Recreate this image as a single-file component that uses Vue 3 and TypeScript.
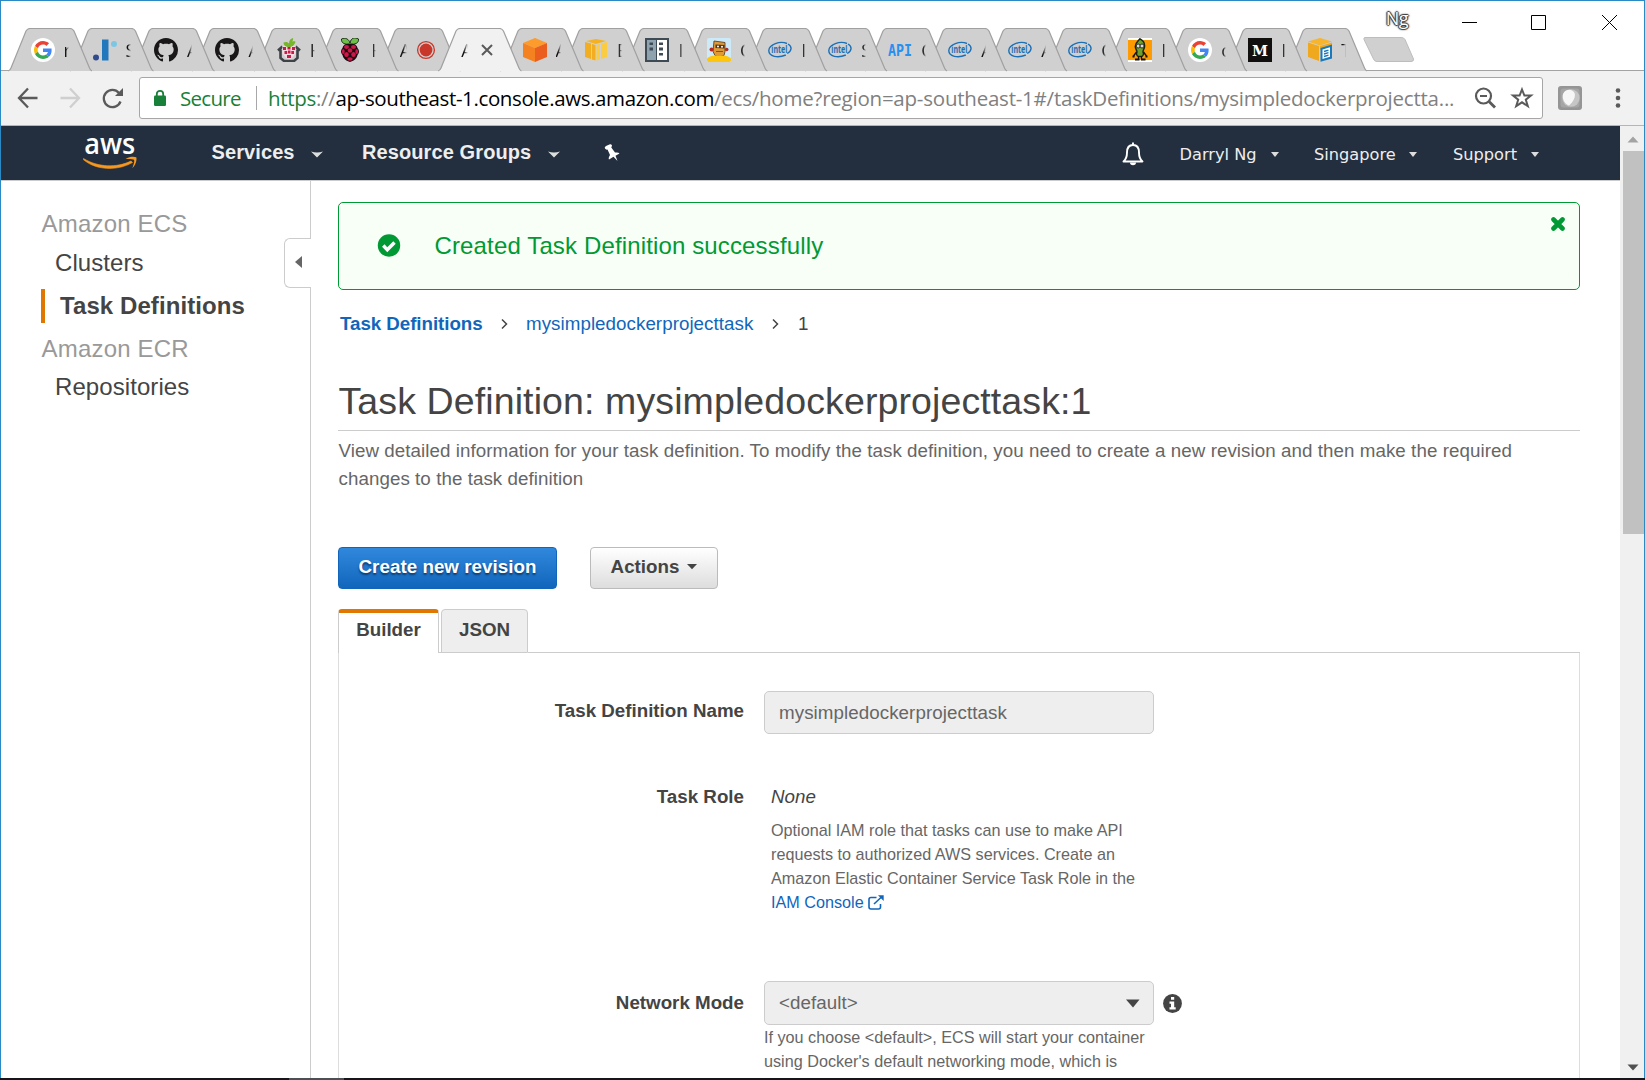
<script setup lang="ts">
interface BrowserTab {
  icon: string
  text: string
  width: number
  kind?: 'recording' | 'active'
}

const wide = 61.45
const narrow = 60

const tabs: BrowserTab[] = [
  { icon: 'google', text: 'r', width: 62 },
  { icon: 'bars', text: 'S', width: wide },
  { icon: 'github', text: 'A', width: wide },
  { icon: 'github', text: 'A', width: wide },
  { icon: 'berryhome', text: 'H', width: wide },
  { icon: 'raspberry', text: 'H', width: wide },
  { icon: 'record', text: 'A', width: wide, kind: 'recording' },
  { icon: 'close', text: 'A', width: wide, kind: 'active' },
  { icon: 'cube', text: 'A', width: wide },
  { icon: 'boxes', text: 'E', width: wide },
  { icon: 'cabinet', text: 'I', width: wide },
  { icon: 'robot', text: 'C', width: wide },
  { icon: 'intel', text: 'I', width: narrow },
  { icon: 'intel', text: 'S', width: narrow },
  { icon: 'api', text: 'C', width: narrow },
  { icon: 'intel', text: 'A', width: narrow },
  { icon: 'intel', text: 'A', width: narrow },
  { icon: 'intel', text: 'C', width: narrow },
  { icon: 'pea', text: 'I', width: narrow },
  { icon: 'google', text: 'c', width: narrow },
  { icon: 'medium', text: 'I', width: narrow },
  { icon: 'package', text: 'T', width: narrow },
]

const accountMenus = [
  { label: 'Darryl Ng', cls: 'm-user' },
  { label: 'Singapore', cls: 'm-region' },
  { label: 'Support', cls: 'm-support' },
]

function fillPath(w: number): string {
  return `M0 43 Q2 42.500 3 40 L18 3 Q19.500 0.500 22 0.500 L${w} 0.500 Q${w + 2.5} 0.500 ${w + 4} 3 L${w + 19.5} 40 Q${w + 20.5} 42.500 ${w + 22} 43 Z`
}

function strokePath(w: number): string {
  return fillPath(w).replace(' Z', '')
}
</script>

<template>
  <svg class="defs" width="0" height="0">
    <symbol id="google" viewBox="0 0 24 24">
      <circle cx="12" cy="12" r="12" fill="#fff" />
      <g transform="translate(3 3) scale(.375)">
        <path fill="#EA4335" d="M24 9.500c3.540 0 6.710 1.220 9.210 3.600l6.850-6.850C35.900 2.380 30.470 0 24 0 14.620 0 6.510 5.380 2.560 13.220l7.980 6.190C12.430 13.720 17.740 9.500 24 9.500z" />
        <path fill="#4285F4" d="M46.980 24.550c0-1.570-.15-3.090-.38-4.550H24v9.020h12.940c-.58 2.960-2.260 5.480-4.780 7.180l7.730 6c4.510-4.180 7.090-10.360 7.090-17.650z" />
        <path fill="#FBBC05" d="M10.530 28.590c-.48-1.450-.76-2.990-.76-4.590s.27-3.140.76-4.590l-7.980-6.190C.92 16.460 0 20.120 0 24c0 3.880.92 7.540 2.560 10.780l7.970-6.190z" />
        <path fill="#34A853" d="M24 48c6.480 0 11.930-2.130 15.890-5.810l-7.730-6c-2.150 1.450-4.920 2.300-8.160 2.300-6.260 0-11.570-4.220-13.470-9.910l-7.980 6.190C6.510 42.620 14.620 48 24 48z" />
      </g>
    </symbol>
    <symbol id="bars" viewBox="0 0 24 24">
      <circle cx="3" cy="19.500" r="3" fill="#324a8e" />
      <rect x="9" y="1.500" width="6.500" height="21" fill="#2178bd" />
      <circle cx="21" cy="6" r="3" fill="#7cc6e4" />
    </symbol>
    <symbol id="github" viewBox="0 0 16 16">
      <path fill="#191717" d="M8 0C3.580 0 0 3.580 0 8c0 3.540 2.290 6.530 5.470 7.590.4.070.55-.17.55-.38 0-.19-.01-.82-.01-1.490-2.010.37-2.530-.49-2.690-.94-.09-.23-.48-.94-.82-1.130-.28-.15-.68-.52-.01-.53.63-.01 1.080.58 1.230.82.72 1.210 1.870.87 2.330.66.07-.52.28-.87.51-1.070-1.780-.2-3.640-.89-3.640-3.950 0-.87.31-1.590.82-2.150-.08-.2-.36-1.020.08-2.120 0 0 .67-.21 2.200.82.64-.18 1.320-.27 2-.27s1.360.09 2 .27c1.530-1.040 2.200-.82 2.200-.82.44 1.100.16 1.920.08 2.120.51.56.82 1.270.82 2.150 0 3.070-1.870 3.750-3.650 3.950.29.25.54.73.54 1.480 0 1.070-.01 1.930-.01 2.200 0 .21.15.46.55.38A8.010 8.010 0 0 0 16 8c0-4.420-3.580-8-8-8z" />
    </symbol>
    <symbol id="berryhome" viewBox="0 0 24 24">
      <path d="M1 12.500L5.500 8.500M23 12.500L18.500 8.500M3.500 11.500v8.500l3.500 3h10l3.500-3v-8.500" fill="none" stroke="#3d4347" stroke-width="2.600" />
      <path d="M5.500 8h13v7.500l-4 5h-5l-4-5z" fill="#f3dbe2" />
      <path d="M6 9h3v3H6zM10.500 8h3v3.500h-3zM15 9h3v3h-3zM7.500 13h2.700v3H7.500zM11 12.500h2.500v3H11zM14.300 13H17v3h-2.700zM10 17h4v3h-4z" fill="#c91c4b" />
      <path d="M12 9C8.500 9 6.500 7 6.500 4.500c2.500-1 4.500-.5 5.500 1 0-3 1.500-5 4-5.500.3 1.500 0 2.500-1 3.500 2-.5 3.500-.5 3.500.5C17.500 7 15 9 12 9z" fill="#77b52b" />
    </symbol>
    <symbol id="raspberry" viewBox="0 0 24 24">
      <path d="M12 6C7 7 3 5 3.500 1 7-1 11 1 12 5 13-.5 17-1 20.500 1 21 5 17 7 12 6z" fill="#6cc04a" stroke="#1b2a12" stroke-width="1" />
      <path d="M12 6c4-1 7 1 7.500 4 2 2 2 5 0 7-1 4-4 6-7.500 7-3.500-1-6.500-3-7.500-7-2-2-2-5 0-7C5 7 8 5 12 6z" fill="#1d0a12" />
      <g fill="#cf1848">
        <ellipse cx="8.500" cy="9" rx="2.500" ry="2" /><ellipse cx="15.500" cy="9" rx="2.500" ry="2" />
        <circle cx="12" cy="12.500" r="2.300" /><ellipse cx="5.300" cy="13.500" rx="1.400" ry="2.500" />
        <ellipse cx="18.700" cy="13.500" rx="1.400" ry="2.500" /><ellipse cx="8.500" cy="16.500" rx="2.300" ry="2.500" />
        <ellipse cx="15.500" cy="16.500" rx="2.300" ry="2.500" /><ellipse cx="12" cy="21" rx="2.700" ry="1.800" />
      </g>
    </symbol>
    <symbol id="record" viewBox="0 0 24 24">
      <circle cx="12" cy="12" r="8.400" fill="none" stroke="#c8372a" stroke-width="1.300" />
      <circle cx="12" cy="12" r="6.400" fill="#c8372a" />
    </symbol>
    <symbol id="close" viewBox="0 0 24 24">
      <path d="M7 7l10 10M17 7L7 17" stroke="#5a5a5a" stroke-width="2" />
    </symbol>
    <symbol id="cube" viewBox="0 0 24 24">
      <path d="M12 0l12 5-12 5L0 5z" fill="#fd9b2c" />
      <path d="M0 5l12 5v14L0 19z" fill="#f58220" />
      <path d="M24 5l-12 5v14l12-5z" fill="#ea5f1e" />
    </symbol>
    <symbol id="boxes" viewBox="0 0 24 24">
      <path d="M12 1l10 2-10 3L2 3z" fill="#f4b223" />
      <path d="M1 4l6 1.500V21l-6-2zM8 6l3.500 1v15.500l-3.500-1z" fill="#f2ae20" />
      <path d="M23 4l-6 1.500V21l6-2zM16 6l-3.500 1v15.500l3.500-1z" fill="#fbcc3f" />
    </symbol>
    <symbol id="cabinet" viewBox="0 0 24 24">
      <rect width="24" height="24" fill="#3f4b54" />
      <rect x="2" y="2" width="9" height="20" fill="#8fa3ae" />
      <rect x="12" y="2" width="10" height="20" fill="#fff" />
      <path d="M4.500 4.500h3.500v2.500H4.500zM4.500 9.500h3.500v3H4.500zM14 4.500h4v2.500h-4zM14 9.500h4v3h-4zM14 15h4v2.500h-4z" fill="#3f4b54" />
    </symbol>
    <symbol id="robot" viewBox="0 0 24 24">
      <rect width="24" height="24" rx="2" fill="#cdeaf8" />
      <path d="M7 3l11 1.500v9l-1 4H8l-2-4z" fill="#e09a35" stroke="#4c351e" stroke-width=".8" />
      <path d="M0 20.500c3-4.500 21-4.500 24 0V22q0 2-2 2H2q-2 0-2-2z" fill="#fdc50c" />
      <path d="M8.500 6.500l9 .5v3.500l-9-.5z" fill="#4a3526" />
      <circle cx="11" cy="8.400" r="1" fill="#fff" /><circle cx="15" cy="8.700" r="1" fill="#fff" />
      <path d="M9 13.500h7" stroke="#7a5426" />
      <circle cx="4.500" cy="11.500" r="2" fill="#b32a25" /><circle cx="19.700" cy="11.500" r="1.800" fill="#b32a25" />
    </symbol>
    <symbol id="pea" viewBox="0 0 24 24">
      <rect width="24" height="24" fill="#fff" />
      <rect y="2" width="24" height="20" fill="#ff9a00" />
      <path d="M12 .8c3 1.500 5 4 4.500 8C16.200 11 15 12 15 14c.8 1.500.5 4-1.500 4.500h-3C8.500 18 8.200 15.500 9 14c0-2-1.700-3-1.700-5.500C7.300 5 9 4 12 .8z" fill="#6f9f2f" stroke="#1c240e" stroke-width="1.500" />
      <circle cx="10.200" cy="8" r="2" fill="#ddd" stroke="#222" stroke-width=".9" /><circle cx="14" cy="8" r="2" fill="#ddd" stroke="#222" stroke-width=".9" />
      <path d="M8.500 14l-3 4M15.500 14l3 4M10.500 18v3M13.500 18v3" stroke="#111" stroke-width="1.300" fill="none" />
      <path d="M7 21.500h4.500M13 21.500h4.500M4.500 18.500h2M17.500 18.500h2" stroke="#111" stroke-width="2" />
    </symbol>
    <symbol id="package" viewBox="0 0 24 24">
      <path d="M12 0l12 3.500L12 7.500 0 3.500z" fill="#f6b52c" />
      <path d="M0 4.500l11 3.500v15L0 19z" fill="#f0a81f" />
      <path d="M24 4.500l-12 3.500v4l12-4z" fill="#f0a81f" />
      <path d="M12.500 10L24 6.500v14L12.500 23.800z" fill="#1879bb" />
      <path d="M14.500 11.500l7.500-2.300v9.500L14.500 21z" fill="#fff" />
      <path d="M16 13.500l4.500-1.300M16 16l4.500-1.300M16 18.500l4.500-1.300" stroke="#1879bb" stroke-width="1.400" />
    </symbol>
  </svg>

  <div class="screen">
    <div class="window">
      <header class="titlebar">
        <div class="tabs">
          <div
            v-for="(tab, i) in tabs"
            :key="i"
            class="tab"
            :class="tab.kind"
            :style="{ width: tab.width + 'px', zIndex: tab.kind === 'active' ? 50 : 40 - i }"
          >
            <svg class="tab-shape" width="84" height="44" viewBox="0 0 84 44">
              <path class="tab-fill" :d="fillPath(tab.width)" />
              <path class="tab-line" :d="strokePath(tab.width)" />
            </svg>
            <svg v-if="tab.icon === 'intel'" class="favicon" viewBox="0 0 24 24">
              <path d="M19 5.500C12 2.500 1 6.500.8 12.500c0 6 9 8 17 4.500M20 6c4.500 2.500 3.800 7-.8 9.500" fill="none" stroke="#1a6fb5" stroke-width="1.400" />
              <text x="3.300" y="15.400" textLength="16" lengthAdjust="spacingAndGlyphs" font-family="Open Sans, sans-serif" font-size="10" font-weight="700" fill="#1a6fb5">intel</text>
            </svg>
            <svg v-else-if="tab.icon === 'api'" class="favicon" viewBox="0 0 24 24">
              <text x="0" y="18" textLength="24" lengthAdjust="spacingAndGlyphs" font-family="DejaVu Sans Mono, monospace" font-size="16" font-weight="700" fill="#2a8fee">API</text>
            </svg>
            <svg v-else-if="tab.icon === 'medium'" class="favicon" viewBox="0 0 24 24">
              <rect width="24" height="24" fill="#12100e" />
              <text x="4" y="17.600" textLength="16" lengthAdjust="spacingAndGlyphs" font-family="DejaVu Serif, serif" font-size="15.500" font-weight="700" fill="#fff">M</text>
            </svg>
            <svg v-else class="favicon"><use :href="'#' + tab.icon" /></svg>
            <span class="tab-text">{{ tab.text }}</span>
          </div>
          <svg class="new-tab" width="54" height="28" viewBox="0 0 54 28">
            <path d="M4 1.500H40Q43 1.500 44 3.500L52.500 23Q53 25.500 50 25.500H16Q13.500 25.500 12.500 23L3 3.500Q2.500 1.500 4 1.500Z" fill="#d0d0d0" stroke="#bdbdbd" />
          </svg>
        </div>
        <div class="controls">
          <span class="profile">Ng</span>
          <svg width="230" height="44" viewBox="0 0 230 44" fill="none" stroke="#000" stroke-width="1">
            <path d="M48 21.500H63M117.500 14.500h14v14h-14zM188 14l15 15M203 14L188 29" />
          </svg>
        </div>
      </header>

      <div class="toolbar">
        <svg class="nav-icons" width="138" height="54" viewBox="0 0 138 54" fill="none" stroke-width="2.300">
          <path d="M36.500 27H19M27 17.500L18 27 27 36.500" stroke="#5a5a5a" />
          <path d="M59.500 27H77.500M69 17.500L78 27 69 36.500" stroke="#cfcfcf" />
          <path d="M118 22A8.600 8.600 0 1 0 119.500 30.500" stroke="#5a5a5a" />
          <path d="M122 17v8h-8z" fill="#5a5a5a" />
        </svg>
        <div class="omnibox">
          <svg class="lock" width="12" height="18" viewBox="0 0 12 18">
            <path d="M2.800 7V5a3.200 3.200 0 0 1 6.400 0v2" fill="none" stroke="#188038" stroke-width="1.800" />
            <rect y="6.500" width="12" height="10.500" rx="1.200" fill="#188038" />
          </svg>
          <span class="secure">Secure</span>
          <span class="divider"></span>
          <span class="url"><i class="scheme">https</i><i class="slashes">://</i><b>ap-southeast-1.console.aws.amazon.com</b><i>/ecs/home?region=ap-southeast-1#/taskDefinitions/mysimpledockerprojectta...</i></span>
          <svg class="omni-icons" width="62" height="24" viewBox="0 0 62 24" fill="none" stroke="#5a5a5a">
            <circle cx="9.500" cy="10" r="7.500" stroke-width="2.200" />
            <path d="M6 10h7" stroke-width="2" />
            <path d="M15 15.500l6 6" stroke-width="2.800" />
            <path d="M48 3.500l2.400 6h6.600l-5.200 4.200 2 6.500-5.800-3.900-5.800 3.900 2-6.500-5.200-4.200h6.600z" stroke-width="2" />
          </svg>
        </div>
        <svg class="extension" width="24" height="24" viewBox="0 0 24 24">
          <rect width="24" height="24" rx="3" fill="#959595" />
          <rect x="2.500" y="2.500" width="19" height="19" rx="3" fill="#a6a6a6" />
          <circle cx="13" cy="12" r="8.700" fill="#c6c6c6" />
          <path d="M5 8c2.500-6 10-5 11.500-1S15 16 11 19.500C6.500 18 4 13 5 8z" fill="#f7f7f7" />
        </svg>
        <svg class="menu-dots" width="6" height="22" viewBox="0 0 6 22" fill="#5a5a5a">
          <circle cx="3" cy="3.500" r="2.300" /><circle cx="3" cy="11" r="2.300" /><circle cx="3" cy="18.500" r="2.300" />
        </svg>
      </div>

      <div class="viewport">
        <div class="page">
          <nav class="aws-nav">
            <svg class="logo" width="56" height="40" viewBox="0 0 56 40">
              <text x="1.200" y="20.500" textLength="51" lengthAdjust="spacingAndGlyphs" font-family="Open Sans, sans-serif" font-size="29" font-weight="600" fill="#fff">aws</text>
              <path d="M.5 25.500C15 34.500 34 35 48 28l1.500 1.500C34 38.500 12 37 .3 26.500z" fill="#f7981f" stroke="#f7981f" stroke-width=".6" />
              <path d="M42.500 26c4-2.800 8.500-2.500 10.800-1.800.8 3-.8 8-4 11 1.500-4.200 2.500-7 1.700-8.400-1.500-1-5-.8-8.500-.8z" fill="#f7981f" />
            </svg>
            <span class="nav-main services">Services</span>
            <svg class="chev" width="12" height="8" viewBox="0 0 12 8"><path d="M0 1.500Q6 3.500 12 1.500L6 7.500z" fill="#ddd" /></svg>
            <span class="nav-main groups">Resource Groups</span>
            <svg class="chev" width="12" height="8" viewBox="0 0 12 8"><path d="M0 1.500Q6 3.500 12 1.500L6 7.500z" fill="#ddd" /></svg>
            <svg class="pin" width="16" height="18" viewBox="0 0 16 18">
              <path d="M1 4.500Q0 3 2 2L6 .3Q8 0 8 1.800L7.300 3.500 11 8.500Q14.500 8 15.500 9.500L11.500 11.700 13.500 17 9.500 12.700 5 15.500Q4 14 6 11L3.500 5.500Q2 6 1 4.500z" fill="#fff" />
            </svg>
            <svg class="bell" width="22" height="24" viewBox="0 0 22 24" fill="none" stroke="#fff" stroke-width="1.900">
              <path d="M1.500 19.500C4.500 17 5 14 5 10.500 5 6 7 3 11 3s6 3 6 7.500c0 3.500.5 6.500 3.500 9z" stroke-linejoin="round" />
              <path d="M11 3V.5" /><path d="M8 20.500a3 2.800 0 0 0 6 0z" fill="#fff" stroke="none" />
            </svg>
            <span v-for="menu in accountMenus" :key="menu.label" class="account" :class="menu.cls">
              {{ menu.label }}
              <svg width="8" height="6" viewBox="0 0 8 6"><path d="M0 0h8L4 5z" fill="#ddd" /></svg>
            </span>
          </nav>

          <div class="body">
            <aside class="sidebar">
              <div class="side-links">
                <div class="side-head">Amazon ECS</div>
                <div class="side-item">Clusters</div>
                <div class="side-item current">Task Definitions</div>
                <div class="side-head second">Amazon ECR</div>
                <div class="side-item second last">Repositories</div>
              </div>
              <div class="side-rail">
                <div class="handle">
                  <svg width="7" height="12" viewBox="0 0 7 12"><path d="M7 0v12L0 6z" fill="#666" /></svg>
                </div>
              </div>
            </aside>

            <main class="content">
              <div class="alert">
                <svg class="alert-icon" width="24" height="24" viewBox="0 0 24 24">
                  <circle cx="12" cy="11.500" r="11.200" fill="#093" />
                  <path d="M6.300 11.500l4 4.300 7.200-7.300" fill="none" stroke="#fff" stroke-width="3.400" />
                </svg>
                <span class="alert-text">Created Task Definition successfully</span>
                <svg class="alert-close" width="14" height="14" viewBox="0 0 14 14">
                  <path d="M2.500 2.500l9 9M11.500 2.500l-9 9" stroke="#093" stroke-width="4.600" stroke-linecap="round" />
                </svg>
              </div>

              <div class="crumbs">
                <a class="strong">Task Definitions</a>
                <svg width="7" height="12" viewBox="0 0 7 12"><path d="M1 1.500L5.500 6 1 10.500" fill="none" stroke="#444" stroke-width="1.500" /></svg>
                <a>mysimpledockerprojecttask</a>
                <svg width="7" height="12" viewBox="0 0 7 12"><path d="M1 1.500L5.500 6 1 10.500" fill="none" stroke="#444" stroke-width="1.500" /></svg>
                <span>1</span>
              </div>

              <h1>Task Definition: mysimpledockerprojecttask:1</h1>
              <p class="lead">View detailed information for your task definition. To modify the task definition, you need to create a new revision and then make the required<br />changes to the task definition</p>

              <div class="actions">
                <button class="primary">Create new revision</button>
                <button class="secondary">Actions <svg width="10" height="6" viewBox="0 0 10 6"><path d="M0 0h10L5 5.300z" fill="#444" /></svg></button>
              </div>

              <div class="panel-tabs">
                <div class="ptab on">Builder</div>
                <div class="ptab off">JSON</div>
                <div class="ptab-rest"></div>
              </div>

              <section class="panel">
                <div class="row name-row">
                  <label>Task Definition Name</label>
                  <div class="field">mysimpledockerprojecttask</div>
                </div>
                <div class="row role-row">
                  <label>Task Role</label>
                  <div class="role">
                    <em>None</em>
                    <p class="help">Optional IAM role that tasks can use to make API<br />requests to authorized AWS services. Create an<br />Amazon Elastic Container Service Task Role in the<br /><a>IAM Console
                      <svg width="16" height="15" viewBox="0 0 16 15" fill="none" stroke="#1166bb" stroke-width="1.600"><path d="M8.500 2.500H3Q1 2.500 1 4.500V12Q1 14 3 14H10.500Q12.500 14 12.500 12V9M6 9L13.500 2" /><path d="M10 .3h5.700V6z" fill="#1166bb" stroke="none" /></svg></a></p>
                  </div>
                </div>
                <div class="row network-row">
                  <label>Network Mode</label>
                  <div>
                    <div class="select-line">
                      <div class="field select">&lt;default&gt;
                        <svg width="14" height="9" viewBox="0 0 14 9"><path d="M0 .5h13.500L7 8.500z" fill="#444" /></svg>
                      </div>
                      <svg class="info" width="19" height="19" viewBox="0 0 19 19">
                        <circle cx="9.500" cy="9.500" r="9.400" fill="#444" />
                        <path d="M8 3h3.200v2.800H8zM6.500 7.500h4.700v5.700h1.500v2.300H6.500v-2.300H8V9.700H6.500z" fill="#fff" />
                      </svg>
                    </div>
                    <p class="help">If you choose &lt;default&gt;, ECS will start your container<br />using Docker's default networking mode, which is</p>
                  </div>
                </div>
              </section>
            </main>
          </div>
        </div>

        <div class="scrollbar">
          <svg width="12" height="7" viewBox="0 0 12 7"><path d="M6 .5L11.500 6.500H.5z" fill="#a3a3a3" /></svg>
          <div class="thumb"></div>
          <svg class="down" width="12" height="7" viewBox="0 0 12 7"><path d="M6 6.500L11.500 .5H.5z" fill="#505050" /></svg>
        </div>
      </div>
    </div>
    <div class="taskbar"><span></span></div>
  </div>
</template>

<style>
html, body { margin: 0; overflow: hidden; }
</style>

<style scoped>
* { box-sizing: border-box; }
.defs { position: absolute; }
svg { display: block; flex: none; }
p, h1 { margin: 0; }
i, b { font-style: normal; font-weight: 400; }
.screen { width: 1645px; height: 1080px; background: #fff; font-family: "Liberation Sans", Arial, sans-serif; color: #444; overflow: hidden; display: flex; flex-direction: column; }
.window { height: 1078px; border: 1px solid #2a8ac4; border-bottom: 0; display: flex; flex-direction: column; overflow: hidden; }
.taskbar { height: 2px; background: #14161c; padding-left: 289px; display: flex; }
.taskbar span { width: 55px; background: #4c4f54; }

.titlebar { height: 69px; flex: none; display: flex; justify-content: space-between; }
.tabs { display: flex; align-items: flex-end; padding-left: 17px; height: 69px; isolation: isolate; flex: none; }
.tab { height: 42px; position: relative; display: flex; align-items: center; padding: 1px 0 0 12.500px; flex: none; }
.tab-shape { position: absolute; left: -10.500px; bottom: -2px; }
.tab-fill { fill: #d0d0d0; }
.tab-line { fill: none; stroke: #a0a0a0; stroke-width: 1.200; }
.active .tab-fill { fill: #f1f1f1; }
.favicon { width: 24px; height: 24px; position: relative; }
.tab-text { position: relative; font: 18px/24px "Open Sans", sans-serif; color: #111; width: 5px; margin-left: 9px; overflow: hidden; -webkit-mask-image: linear-gradient(90deg, #000 40%, transparent); mask-image: linear-gradient(90deg, #000 40%, transparent); }
.recording .tab-text, .active .tab-text { order: 1; margin: 0 7px 0 0; width: 7px; }
.recording .favicon, .active .favicon { order: 2; }
.new-tab { margin: 0 0 6px 5px; }
.controls { display: flex; height: 44px; flex: none; margin-left: -60px; }
.profile { font: 18px/34px "Open Sans", sans-serif; color: #fff; letter-spacing: -0.5px; margin-right: 6px; text-shadow: 1px 0 1px #333, -1px 0 1px #333, 0 1px 1px #333, 0 -1px 1px #333, 0 0 3px #777; }

.toolbar { height: 56px; flex: none; background: #f1f1f1; border-top: 1px solid #a3a3a3; border-bottom: 1px solid #b6b4b6; display: flex; align-items: center; }
.omnibox { width: 1404px; height: 42px; border: 1px solid #a6a6a6; border-radius: 3px; background: #fff; display: flex; align-items: center; padding-left: 14px; font: 20.500px/30px "Open Sans", sans-serif; flex: none; }
.secure { width: 76px; margin-left: 14px; color: #188038; letter-spacing: -0.700px; }
.divider { width: 1px; height: 24px; background: #a8a8a8; }
.url { margin-left: 11px; width: 1195px; white-space: nowrap; letter-spacing: -0.225px; color: #808080; }
.url b { color: #000; letter-spacing: -0.390px; }
.url .scheme { color: #188038; letter-spacing: -0.300px; }
.url .slashes { letter-spacing: -0.300px; }
.omni-icons { margin-left: 11px; }
.extension { margin-left: 15px; }
.menu-dots { margin-left: 33px; }

.viewport { flex: 1; min-height: 0; display: flex; }
.page { width: 1619px; display: flex; flex-direction: column; overflow: hidden; flex: none; }
.scrollbar { flex: 1; background: #f0f0f0; display: flex; flex-direction: column; align-items: center; padding: 10px 0 7px 2px; }
.thumb { width: 21px; height: 383px; background: #c1c1c1; margin-top: 8px; flex: none; }
.down { margin-top: auto; }

.aws-nav { height: 54px; flex: none; background: #232f3e; display: flex; align-items: flex-start; padding-left: 82px; color: #fff; }
.logo { margin-top: 7px; }
.nav-main { font-size: 20px; line-height: 30px; font-weight: 700; margin-top: 11px; white-space: nowrap; color: #eee; letter-spacing: 0.100px; }
.services { margin-left: 72.500px; width: 99.500px; }
.groups { margin-left: 39px; width: 186px; }
.chev { margin-top: 24px; }
.pin { margin: 18px 0 0 44px; }
.bell { margin: 16px 0 0 502px; }
.account { display: flex; align-items: center; justify-content: space-between; font: 16.200px/30px "DejaVu Sans", sans-serif; color: #eee; margin-top: 14px; white-space: nowrap; }
.m-user { width: 99px; margin-left: 35.500px; }
.m-region { width: 103px; margin-left: 35.500px; }
.m-support { width: 86px; margin-left: 36px; }

.body { flex: 1; min-height: 0; display: flex; border-top: 1px solid #ccc; }
.sidebar { width: 310px; display: flex; flex: none; font-size: 24px; letter-spacing: 0.080px; }
.side-links { width: 283px; padding-top: 23px; }
.side-head { padding-left: 40.500px; line-height: 39px; color: #999; letter-spacing: 0.200px; }
.side-item { padding-left: 54px; line-height: 39px; }
.side-item.current { margin: 7px 0 7px 40px; padding-left: 15px; border-left: 4px solid #e07700; line-height: 34px; font-weight: 700; }
.side-head.second { line-height: 37px; }
.side-item.last { line-height: 39px; }
.side-rail { width: 27px; display: flex; flex-direction: column; }
.side-rail::before, .side-rail::after { content: ""; border-right: 1px solid #ccc; }
.side-rail::before { height: 57px; }
.side-rail::after { flex: 1; }
.handle { height: 50px; border: 1px solid #ccc; border-right: 0; border-radius: 6px 0 0 6px; display: flex; align-items: center; padding: 0 0 2px 10px; }

.content { width: 1242px; margin-left: 27px; padding-top: 21px; flex: none; font-size: 18.750px; }
.alert { height: 88px; border: 1px solid #009a35; border-radius: 5px; background: #f7fff7; display: flex; align-items: center; padding: 0 14px 0 38px; }
.alert-text { margin-left: 33.500px; font-size: 24px; color: #093; flex: 1; letter-spacing: 0.140px; }
.alert-close { align-self: flex-start; margin-top: 14px; }
.crumbs { display: flex; align-items: center; line-height: 28px; margin-top: 20px; padding-left: 2px; white-space: nowrap; }
.crumbs a { color: #1166bb; width: 228px; letter-spacing: 0.050px; }
.crumbs .strong { font-weight: 700; width: 143px; letter-spacing: -0.050px; }
.crumbs svg { margin: 0 18px; }
.crumbs span { margin-left: 1px; }
h1 { font-size: 37.500px; font-weight: 400; line-height: 56px; border-bottom: 1px solid #ccc; margin-top: 35px; height: 58px; white-space: nowrap; letter-spacing: 0.110px; padding-left: 0.5px; }
.lead { line-height: 28px; margin-top: 6px; color: #666; white-space: nowrap; letter-spacing: 0.062px; padding-left: 0.5px; }
.actions { display: flex; gap: 33px; margin-top: 54px; }
button { height: 42px; border-radius: 4px; font: 700 18.750px/28px "Liberation Sans", Arial, sans-serif; padding: 0 0 2px; display: flex; align-items: center; justify-content: center; }
.primary { width: 219px; color: #fff; border: 1px solid #1166bb; background: linear-gradient(#3088dd, #1166bb); text-shadow: 0 2px 2px #0a3c70; letter-spacing: 0.040px; }
.secondary { width: 128px; gap: 8px; color: #444; border: 1px solid #bbb; background: linear-gradient(#fff, #ddd); }
.panel-tabs { display: flex; margin-top: 20px; height: 44px; font-weight: 700; }
.ptab { border: 1px solid #ccc; border-radius: 4px 4px 0 0; text-align: center; line-height: 40px; }
.ptab.on { width: 101px; border-top: 4px solid #e07700; border-bottom: 0; line-height: 34px; }
.ptab.off { width: 87px; margin-left: 2px; background: #eee; position: relative; }
.ptab.off::before { content: ""; position: absolute; left: -3px; bottom: -1px; width: 3px; height: 1px; background: #ccc; }
.ptab-rest { flex: 1; border-bottom: 1px solid #ccc; }
.panel { height: 440px; border: 1px solid #ddd; border-top: 0; border-bottom: 0; padding-top: 38px; }
.row { display: flex; }
.row label { width: 405px; text-align: right; font-weight: 700; line-height: 28px; flex: none; }
.field { width: 390px; height: 43px; border: 1px solid #ccc; border-radius: 5px; background: #eee; color: #666; padding-left: 14px; line-height: 41px; margin-left: 20px; letter-spacing: 0.070px; }
.name-row label { padding-top: 6px; }
.role-row { margin-top: 49px; }
.role { margin-left: 27px; }
em { display: block; line-height: 28px; }
.help { font-size: 16.200px; line-height: 24px; color: #666; white-space: nowrap; }
.role .help { margin-top: 7px; }
.help a { color: #1166bb; }
.help svg { display: inline-block; vertical-align: -2px; }
.network-row { margin-top: 67px; }
.network-row label { padding-top: 8px; }
.network-row .help { margin-left: 20px; }
.select-line { display: flex; align-items: center; gap: 9px; }
.select { height: 44px; line-height: 42px; display: flex; align-items: center; justify-content: space-between; padding-right: 13.500px; }
</style>
